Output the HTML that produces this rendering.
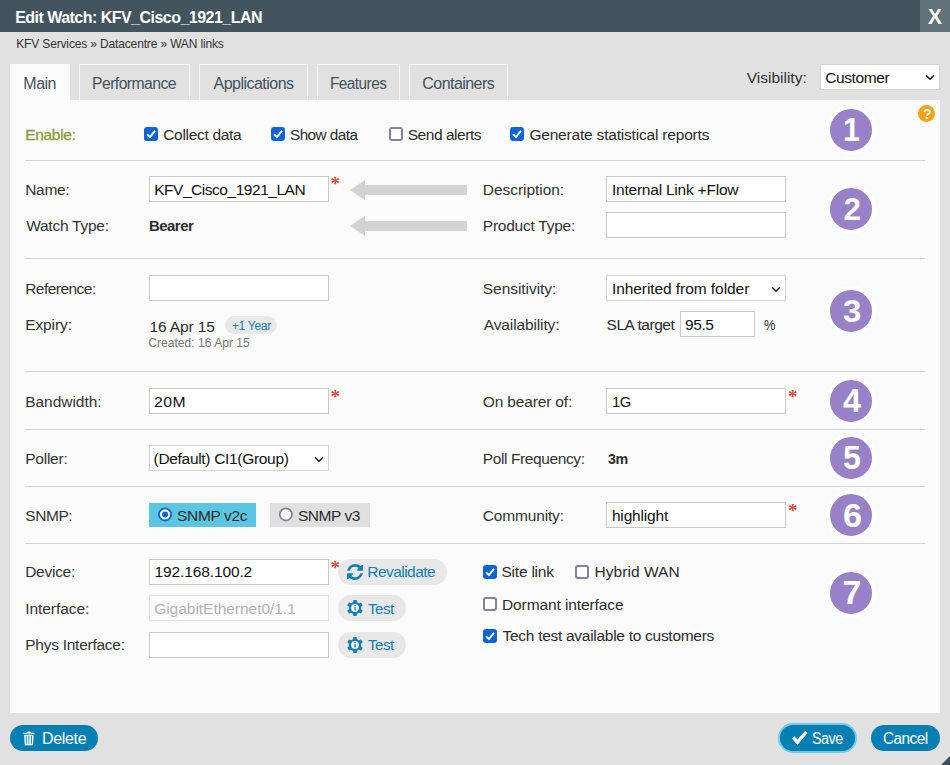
<!DOCTYPE html>
<html lang="en">
<head>
<meta charset="utf-8">
<title>Edit Watch: KFV_Cisco_1921_LAN</title>
<style>
*{box-sizing:border-box;margin:0;padding:0}
html,body{width:950px;height:765px;overflow:hidden}
body{background:#e1e1e1;font-family:"Liberation Sans",sans-serif;font-size:15px;color:#333;position:relative}
.a,.t{position:absolute;white-space:nowrap}
.t{line-height:20px;transform-origin:0 50%}
.hr{left:25px;width:900px;height:1px;background:#d2d2d2}
.inp{height:26px;background:#fff;border:1px solid #cacaca}
.sel{border-color:#d4d4d4}
.chev{width:10px;height:7px}
.req{color:#dc4a3c;font-weight:bold;font-size:19px;line-height:20px;font-family:"Liberation Serif",serif}
.num{width:50px;height:50px;border-radius:50%;background:#9881c7;border:4px solid #fff}
.cb{width:14px;height:14px;border-radius:3px;border:2px solid #85859a;background:#fff}
.cb.on{background:#0c64d8;border-color:#0c64d8}
.cb svg{position:absolute;left:-2px;top:-2px;width:14px;height:14px}
.rd{width:14px;height:14px;border-radius:50%;border:2px solid #85859a;background:#fff}
.pill{height:26px;border-radius:13px;background:#e8e8e8}
.btn{height:26px;border-radius:13px;background:#047fb4}
.tab{top:64px;height:36px;border:1px solid #f6f6f6;border-bottom:none;background:#e1e1e1}
</style>
</head>
<body>
<div class="a" style="left:0;top:0;width:950px;height:32px;background:#44545f"></div>
<div class="a" style="left:920px;top:0;width:30px;height:32px;background:#63717a"></div>

<div class="a" style="left:10px;top:100px;width:930px;height:613px;background:#fbfbfb"></div>
<div class="a tab" style="left:10px;width:60px;background:#fbfbfb;border-color:#fbfbfb;height:37px"></div>
<div class="a tab" style="left:79px;width:111px"></div>
<div class="a tab" style="left:199px;width:109px"></div>
<div class="a tab" style="left:317px;width:83px"></div>
<div class="a tab" style="left:409px;width:99px"></div>

<div class="a inp sel" style="left:820px;top:64px;width:120px"></div>
<svg class="a chev" style="left:925px;top:74px" viewBox="0 0 10 7"><path d="M1 1.2 L5 5.2 L9 1.2" fill="none" stroke="#1a1a1a" stroke-width="1.5"/></svg>

<div class="a" style="left:918px;top:105px;width:17px;height:17px;border-radius:50%;background:#f2a413"></div>

<!-- separators -->
<div class="a hr" style="top:160px"></div>
<div class="a hr" style="top:258px"></div>
<div class="a hr" style="top:371px"></div>
<div class="a hr" style="top:429px"></div>
<div class="a hr" style="top:486px"></div>
<div class="a hr" style="top:543px"></div>

<!-- number circles -->
<div class="a num" style="left:826px;top:105px"></div>
<div class="a num" style="left:826px;top:184px"></div>
<div class="a num" style="left:826px;top:286px"></div>
<div class="a num" style="left:826px;top:375.5px"></div>
<div class="a num" style="left:826px;top:433px"></div>
<div class="a num" style="left:826px;top:490px"></div>
<div class="a num" style="left:826px;top:568px"></div>

<!-- row 1 checkboxes -->
<div class="a cb on" style="left:144px;top:127px"><svg viewBox="0 0 14 14"><path d="M3.1 7.3 L5.9 10.1 L11 3.9" fill="none" stroke="#fff" stroke-width="2"/></svg></div>
<div class="a cb on" style="left:271px;top:127px"><svg viewBox="0 0 14 14"><path d="M3.1 7.3 L5.9 10.1 L11 3.9" fill="none" stroke="#fff" stroke-width="2"/></svg></div>
<div class="a cb" style="left:389px;top:127px"></div>
<div class="a cb on" style="left:510px;top:127px"><svg viewBox="0 0 14 14"><path d="M3.1 7.3 L5.9 10.1 L11 3.9" fill="none" stroke="#fff" stroke-width="2"/></svg></div>

<!-- row 2 -->
<div class="a inp" style="left:149px;top:176px;width:180px"></div>
<div class="a req" style="left:330.5px;top:174px">*</div>
<svg class="a" style="left:350px;top:180px" width="117" height="20" viewBox="0 0 117 20"><path d="M0 10 L15 0 L15 5 L117 5 L117 15 L15 15 L15 20 Z" fill="#d3d3d3"/></svg>
<div class="a inp" style="left:606px;top:176px;width:180px"></div>
<svg class="a" style="left:350px;top:216px" width="117" height="20" viewBox="0 0 117 20"><path d="M0 10 L15 0 L15 5 L117 5 L117 15 L15 15 L15 20 Z" fill="#d3d3d3"/></svg>
<div class="a inp" style="left:606px;top:212px;width:180px"></div>

<!-- row 3 -->
<div class="a inp" style="left:149px;top:275px;width:180px"></div>
<div class="a inp sel" style="left:606px;top:275px;width:180px"></div>
<svg class="a chev" style="left:771px;top:285.5px" viewBox="0 0 10 7"><path d="M1 1.2 L5 5.2 L9 1.2" fill="none" stroke="#1a1a1a" stroke-width="1.5"/></svg>
<div class="a" style="left:225px;top:316px;width:52px;height:18px;border-radius:9px;background:#e8e8e8"></div>
<div class="a inp" style="left:680px;top:311px;width:75px"></div>

<!-- row 4 -->
<div class="a inp" style="left:149px;top:388px;width:180px"></div>
<div class="a req" style="left:330.5px;top:386.5px">*</div>
<div class="a inp" style="left:606px;top:388px;width:180px"></div>
<div class="a req" style="left:788px;top:386.5px">*</div>

<!-- row 5 -->
<div class="a inp sel" style="left:149px;top:445px;width:180px"></div>
<svg class="a chev" style="left:314px;top:455.5px" viewBox="0 0 10 7"><path d="M1 1.2 L5 5.2 L9 1.2" fill="none" stroke="#1a1a1a" stroke-width="1.5"/></svg>

<!-- row 6 -->
<div class="a" style="left:149px;top:503px;width:107px;height:24px;background:#5bc6e2"></div>
<svg class="a" style="left:157px;top:506px" width="17" height="17" viewBox="0 0 17 17"><circle cx="8.1" cy="8.4" r="6.1" fill="#fff" stroke="#0c64d8" stroke-width="1.8"/><circle cx="8.1" cy="8.4" r="3" fill="#0c64d8"/></svg>
<div class="a" style="left:270px;top:503px;width:100px;height:24px;background:#e0e0e0"></div>
<svg class="a" style="left:278px;top:506px" width="17" height="17" viewBox="0 0 17 17"><circle cx="7.9" cy="8.4" r="6.1" fill="#fff" stroke="#85859a" stroke-width="1.8"/></svg>
<div class="a inp" style="left:606px;top:502px;width:180px"></div>
<div class="a req" style="left:788px;top:500.5px">*</div>

<!-- row 7 -->
<div class="a inp" style="left:149px;top:559px;width:180px"></div>
<div class="a req" style="left:330.5px;top:557.5px">*</div>
<div class="a pill" style="left:338px;top:559px;width:109px"></div>
<svg class="a" style="left:347px;top:564px" width="16" height="16" viewBox="128 128 1536 1536"><path fill="#1580b4" d="M1639 1056q0 5-1 7-64 268-268 434.500t-478 166.500q-146 0-282.500-55t-243.500-157l-129 129q-19 19-45 19t-45-19-19-45v-448q0-26 19-45t45-19h448q26 0 45 19t19 45-19 45l-137 137q71 66 161 102t187 36q134 0 250-65t186-179q11-17 53-117 8-23 30-23h192q13 0 22.500 9.500t9.500 22.500zm25-800v448q0 26-19 45t-45 19h-448q-26 0-45-19t-19-45 19-45l138-138q-148-137-349-137-134 0-250 65t-186 179q-11 17-53 117-8 23-30 23h-199q-13 0-22.500-9.500t-9.500-22.500v-7q65-268 270-434.500t480-166.500q146 0 284 55.500t245 156.500l130-129q19-19 45-19t45 19 19 45z"/></svg>
<div class="a inp" style="left:149px;top:595px;width:180px;border-color:#e0e0e0;background:#fbfbfb"></div>
<div class="a pill" style="left:338px;top:595px;width:68px"></div>
<svg class="a gear" style="left:347px;top:600px" width="16" height="16" viewBox="-8 -8 16 16"><g fill="#1580b4"><circle r="6.2"/><rect x="-1.9" y="-8" width="3.8" height="16" rx="0.8"/><rect x="-1.9" y="-8" width="3.8" height="16" rx="0.8" transform="rotate(60)"/><rect x="-1.9" y="-8" width="3.8" height="16" rx="0.8" transform="rotate(120)"/></g><circle r="3.9" fill="#eef3f6"/><rect x="-0.6" y="-1" width="1.3" height="3.4" fill="#1580b4"/><circle cx="0" cy="-2.3" r="0.8" fill="#1580b4"/></svg>
<div class="a inp" style="left:149px;top:632px;width:180px"></div>
<div class="a pill" style="left:338px;top:632px;width:68px"></div>
<svg class="a gear" style="left:347px;top:636.5px" width="16" height="16" viewBox="-8 -8 16 16"><g fill="#1580b4"><circle r="6.2"/><rect x="-1.9" y="-8" width="3.8" height="16" rx="0.8"/><rect x="-1.9" y="-8" width="3.8" height="16" rx="0.8" transform="rotate(60)"/><rect x="-1.9" y="-8" width="3.8" height="16" rx="0.8" transform="rotate(120)"/></g><circle r="3.9" fill="#eef3f6"/><rect x="-0.6" y="-1" width="1.3" height="3.4" fill="#1580b4"/><circle cx="0" cy="-2.3" r="0.8" fill="#1580b4"/></svg>

<div class="a cb on" style="left:483px;top:565px"><svg viewBox="0 0 14 14"><path d="M3.1 7.3 L5.9 10.1 L11 3.9" fill="none" stroke="#fff" stroke-width="2"/></svg></div>
<div class="a cb" style="left:575px;top:565px"></div>
<div class="a cb" style="left:483px;top:597px"></div>
<div class="a cb on" style="left:483px;top:629px"><svg viewBox="0 0 14 14"><path d="M3.1 7.3 L5.9 10.1 L11 3.9" fill="none" stroke="#fff" stroke-width="2"/></svg></div>

<!-- footer -->
<div class="a btn" style="left:10px;top:725px;width:88px"></div>
<svg class="a" style="left:23px;top:730.5px" width="12" height="15" viewBox="0 0 12 15"><path fill="#fff" d="M0.3 1.7 H3.6 L4.4 0.6 H7.4 L8.2 1.7 H11.5 V2.8 H0.3 Z M1.2 3.7 H10.6 L10.1 14.2 H1.7 Z"/><path stroke="#047fb4" stroke-width="0.9" d="M3.3 4.8 V12.8 M5.9 4.8 V12.8 M8.5 4.8 V12.8"/></svg>
<div class="a" style="left:778px;top:723px;width:79px;height:30px;border-radius:15px;background:#6ccbe8"></div>
<div class="a btn" style="left:780px;top:725px;width:75px"></div>
<svg class="a" style="left:790px;top:729px" width="20" height="18" viewBox="790 729 20 18"><path fill="#fff" d="M791.9 738.6 L794.4 736.2 L797.5 739.6 L805.1 731 L807.4 733 L797.4 745 Z"/></svg>
<div class="a btn" style="left:871px;top:725px;width:69px"></div>
<svg class="a" style="left:940px;top:755px" width="10" height="10" viewBox="0 0 10 10"><path d="M10 1 L10 10 L1 10 Z" fill="#3f505c"/></svg>

<div class="t" style="left:15.20px;top:8.00px;font-size:16px;color:#fff;font-weight:bold;letter-spacing:-0.528px">Edit Watch: KFV_Cisco_1921_LAN</div>
<div class="t" style="left:16.20px;top:34.00px;font-size:12px;color:#333;letter-spacing:-0.147px">KFV Services » Datacentre » WAN links</div>
<div class="t" style="left:23.30px;top:74.30px;font-size:16px;color:#45525c;letter-spacing:-0.500px">Main</div>
<div class="t" style="left:92.32px;top:74.30px;font-size:16px;color:#45525c;letter-spacing:-0.550px;transform:scaleX(0.9822)">Performance</div>
<div class="t" style="left:213.50px;top:74.30px;font-size:16px;color:#45525c;letter-spacing:-0.518px">Applications</div>
<div class="t" style="left:330.04px;top:74.30px;font-size:16px;color:#45525c;letter-spacing:-0.550px;transform:scaleX(0.9596)">Features</div>
<div class="t" style="left:422.30px;top:74.30px;font-size:16px;color:#45525c;letter-spacing:-0.550px">Containers</div>
<div class="t" style="left:746.70px;top:68.00px;font-size:15.5px;color:#333">Visibility:</div>
<div class="t" style="left:825.20px;top:68.00px;font-size:15.5px;color:#111;letter-spacing:-0.400px">Customer</div>
<div class="t" style="left:25.20px;top:124.80px;font-size:15.5px;color:#8c9a3a;letter-spacing:-0.300px;-webkit-text-stroke:0.3px #8c9a3a">Enable:</div>
<div class="t" style="left:163.20px;top:124.80px;font-size:15.5px;color:#2c2c2c;letter-spacing:-0.300px">Collect data</div>
<div class="t" style="left:290.21px;top:124.80px;font-size:15.5px;color:#2c2c2c;letter-spacing:-0.550px;transform:scaleX(0.9869)">Show data</div>
<div class="t" style="left:407.70px;top:124.80px;font-size:15.5px;color:#2c2c2c;letter-spacing:-0.450px">Send alerts</div>
<div class="t" style="left:529.40px;top:124.80px;font-size:15.5px;color:#2c2c2c;letter-spacing:-0.193px">Generate statistical reports</div>
<div class="t" style="left:25.20px;top:179.80px;font-size:15.5px;color:#333;letter-spacing:-0.275px">Name:</div>
<div class="t" style="left:154.20px;top:179.80px;font-size:15.5px;color:#111;letter-spacing:-0.465px">KFV_Cisco_1921_LAN</div>
<div class="t" style="left:482.80px;top:179.80px;font-size:15.5px;color:#333;letter-spacing:-0.045px">Description:</div>
<div class="t" style="left:611.90px;top:179.80px;font-size:15.5px;color:#111;letter-spacing:-0.217px">Internal Link +Flow</div>
<div class="t" style="left:26.20px;top:215.70px;font-size:15.5px;color:#333;letter-spacing:-0.250px">Watch Type:</div>
<div class="t" style="left:149.23px;top:215.70px;font-size:15.5px;color:#2c2c2c;font-weight:bold;letter-spacing:-0.550px;transform:scaleX(0.9657)">Bearer</div>
<div class="t" style="left:482.80px;top:215.70px;font-size:15.5px;color:#333;letter-spacing:-0.242px">Product Type:</div>
<div class="t" style="left:25.20px;top:278.50px;font-size:15.5px;color:#333;letter-spacing:-0.533px">Reference:</div>
<div class="t" style="left:482.80px;top:278.50px;font-size:15.5px;color:#333;letter-spacing:-0.045px">Sensitivity:</div>
<div class="t" style="left:611.90px;top:278.50px;font-size:15.5px;color:#111;letter-spacing:-0.065px">Inherited from folder</div>
<div class="t" style="left:25.20px;top:315.00px;font-size:15.5px;color:#333;letter-spacing:-0.100px">Expiry:</div>
<div class="t" style="left:149.40px;top:316.80px;font-size:15.5px;color:#2c2c2c;letter-spacing:-0.100px">16 Apr 15</div>
<div class="t" style="left:231.90px;top:315.80px;font-size:12px;color:#1380b0;letter-spacing:-0.283px">+1 Year</div>
<div class="t" style="left:148.20px;top:333.20px;font-size:12px;color:#777;letter-spacing:0.047px">Created: 16 Apr 15</div>
<div class="t" style="left:483.80px;top:315.00px;font-size:15.5px;color:#333;letter-spacing:-0.125px">Availability:</div>
<div class="t" style="left:606.60px;top:315.00px;font-size:15.5px;color:#2c2c2c;letter-spacing:-0.467px">SLA target</div>
<div class="t" style="left:684.90px;top:315.00px;font-size:15.5px;color:#111;letter-spacing:-0.367px">95.5</div>
<div class="t" style="left:764.40px;top:315.00px;font-size:14px;color:#2c2c2c;transform:scaleX(0.9167)">%</div>
<div class="t" style="left:25.20px;top:391.60px;font-size:15.5px;color:#333;letter-spacing:-0.033px">Bandwidth:</div>
<div class="t" style="left:154.19px;top:391.60px;font-size:15.5px;color:#111;letter-spacing:0.550px;transform:scaleX(1.0137)">20M</div>
<div class="t" style="left:482.80px;top:391.60px;font-size:15.5px;color:#333;letter-spacing:-0.158px">On bearer of:</div>
<div class="t" style="left:612.45px;top:391.60px;font-size:15.5px;color:#111;letter-spacing:-0.550px;transform:scaleX(0.9539)">1G</div>
<div class="t" style="left:25.20px;top:448.90px;font-size:15.5px;color:#333;letter-spacing:-0.233px">Poller:</div>
<div class="t" style="left:153.60px;top:448.90px;font-size:15.5px;color:#111;letter-spacing:-0.316px">(Default) CI1(Group)</div>
<div class="t" style="left:482.80px;top:448.90px;font-size:15.5px;color:#333;letter-spacing:-0.393px">Poll Frequency:</div>
<div class="t" style="left:607.80px;top:448.90px;font-size:15.5px;color:#2c2c2c;font-weight:bold;letter-spacing:-0.550px;transform:scaleX(0.9184)">3m</div>
<div class="t" style="left:25.20px;top:505.70px;font-size:15.5px;color:#333;letter-spacing:-0.400px">SNMP:</div>
<div class="t" style="left:177.10px;top:505.70px;font-size:15.5px;color:#2c2c2c;letter-spacing:-0.371px">SNMP v2c</div>
<div class="t" style="left:298.00px;top:505.70px;font-size:15.5px;color:#2c2c2c;letter-spacing:-0.483px">SNMP v3</div>
<div class="t" style="left:482.80px;top:505.70px;font-size:15.5px;color:#333;letter-spacing:-0.167px">Community:</div>
<div class="t" style="left:611.90px;top:505.70px;font-size:15.5px;color:#111;letter-spacing:-0.163px">highlight</div>
<div class="t" style="left:25.20px;top:562.30px;font-size:15.5px;color:#333;letter-spacing:-0.267px">Device:</div>
<div class="t" style="left:154.50px;top:562.30px;font-size:15.5px;color:#111;letter-spacing:-0.117px">192.168.100.2</div>
<div class="t" style="left:367.31px;top:562.30px;font-size:15.5px;color:#1380b0;letter-spacing:-0.550px">Revalidate</div>
<div class="t" style="left:25.20px;top:598.60px;font-size:15.5px;color:#333;letter-spacing:-0.044px">Interface:</div>
<div class="t" style="left:154.20px;top:598.60px;font-size:15.5px;color:#b4b4b4;letter-spacing:-0.032px">GigabitEthernet0/1.1</div>
<div class="t" style="left:368.30px;top:598.60px;font-size:15.5px;color:#1380b0;letter-spacing:-0.550px;transform:scaleX(0.9753)">Test</div>
<div class="t" style="left:25.20px;top:635.30px;font-size:15.5px;color:#333;letter-spacing:-0.257px">Phys Interface:</div>
<div class="t" style="left:368.30px;top:635.30px;font-size:15.5px;color:#1380b0;letter-spacing:-0.550px;transform:scaleX(0.9753)">Test</div>
<div class="t" style="left:501.50px;top:562.30px;font-size:15.5px;color:#2c2c2c;letter-spacing:-0.225px">Site link</div>
<div class="t" style="left:594.40px;top:562.30px;font-size:15.5px;color:#2c2c2c;letter-spacing:0.067px">Hybrid WAN</div>
<div class="t" style="left:502.00px;top:594.60px;font-size:15.5px;color:#2c2c2c;letter-spacing:-0.100px">Dormant interface</div>
<div class="t" style="left:502.50px;top:626.40px;font-size:15.5px;color:#2c2c2c;letter-spacing:-0.281px">Tech test available to customers</div>
<div class="t" style="left:42.10px;top:729.20px;font-size:16px;color:#fff;letter-spacing:-0.360px">Delete</div>
<div class="t" style="left:812.21px;top:728.80px;font-size:16px;color:#fff;letter-spacing:-0.550px;transform:scaleX(0.8936)">Save</div>
<div class="t" style="left:883.14px;top:729.20px;font-size:16px;color:#fff;letter-spacing:-0.550px;transform:scaleX(0.9591)">Cancel</div>
<div class="t" style="left:928.40px;top:7.20px;font-size:21.5px;color:#fff;font-weight:bold;transform:scaleX(0.9714)">X</div>
<div class="t" style="left:923.33px;top:103.90px;font-size:14.5px;color:#fff;font-weight:bold;transform:scaleX(0.9714)">?</div>
<div class="t" style="left:842.81px;top:119.20px;font-size:34px;color:#fff;font-weight:bold;transform:scaleX(0.8937)">1</div>
<div class="t" style="left:843.55px;top:199.80px;font-size:31.4px;color:#fff;font-weight:bold">2</div>
<div class="t" style="left:842.65px;top:302.30px;font-size:31.4px;color:#fff;font-weight:bold;transform:scaleX(1.0500)">3</div>
<div class="t" style="left:842.60px;top:390.40px;font-size:34px;color:#fff;font-weight:bold;transform:scaleX(0.9579)">4</div>
<div class="t" style="left:842.95px;top:447.20px;font-size:34px;color:#fff;font-weight:bold;transform:scaleX(0.9471)">5</div>
<div class="t" style="left:842.59px;top:504.50px;font-size:34px;color:#fff;font-weight:bold;transform:scaleX(1.0118)">6</div>
<div class="t" style="left:842.41px;top:582.00px;font-size:34px;color:#fff;font-weight:bold">7</div>
</body>
</html>
